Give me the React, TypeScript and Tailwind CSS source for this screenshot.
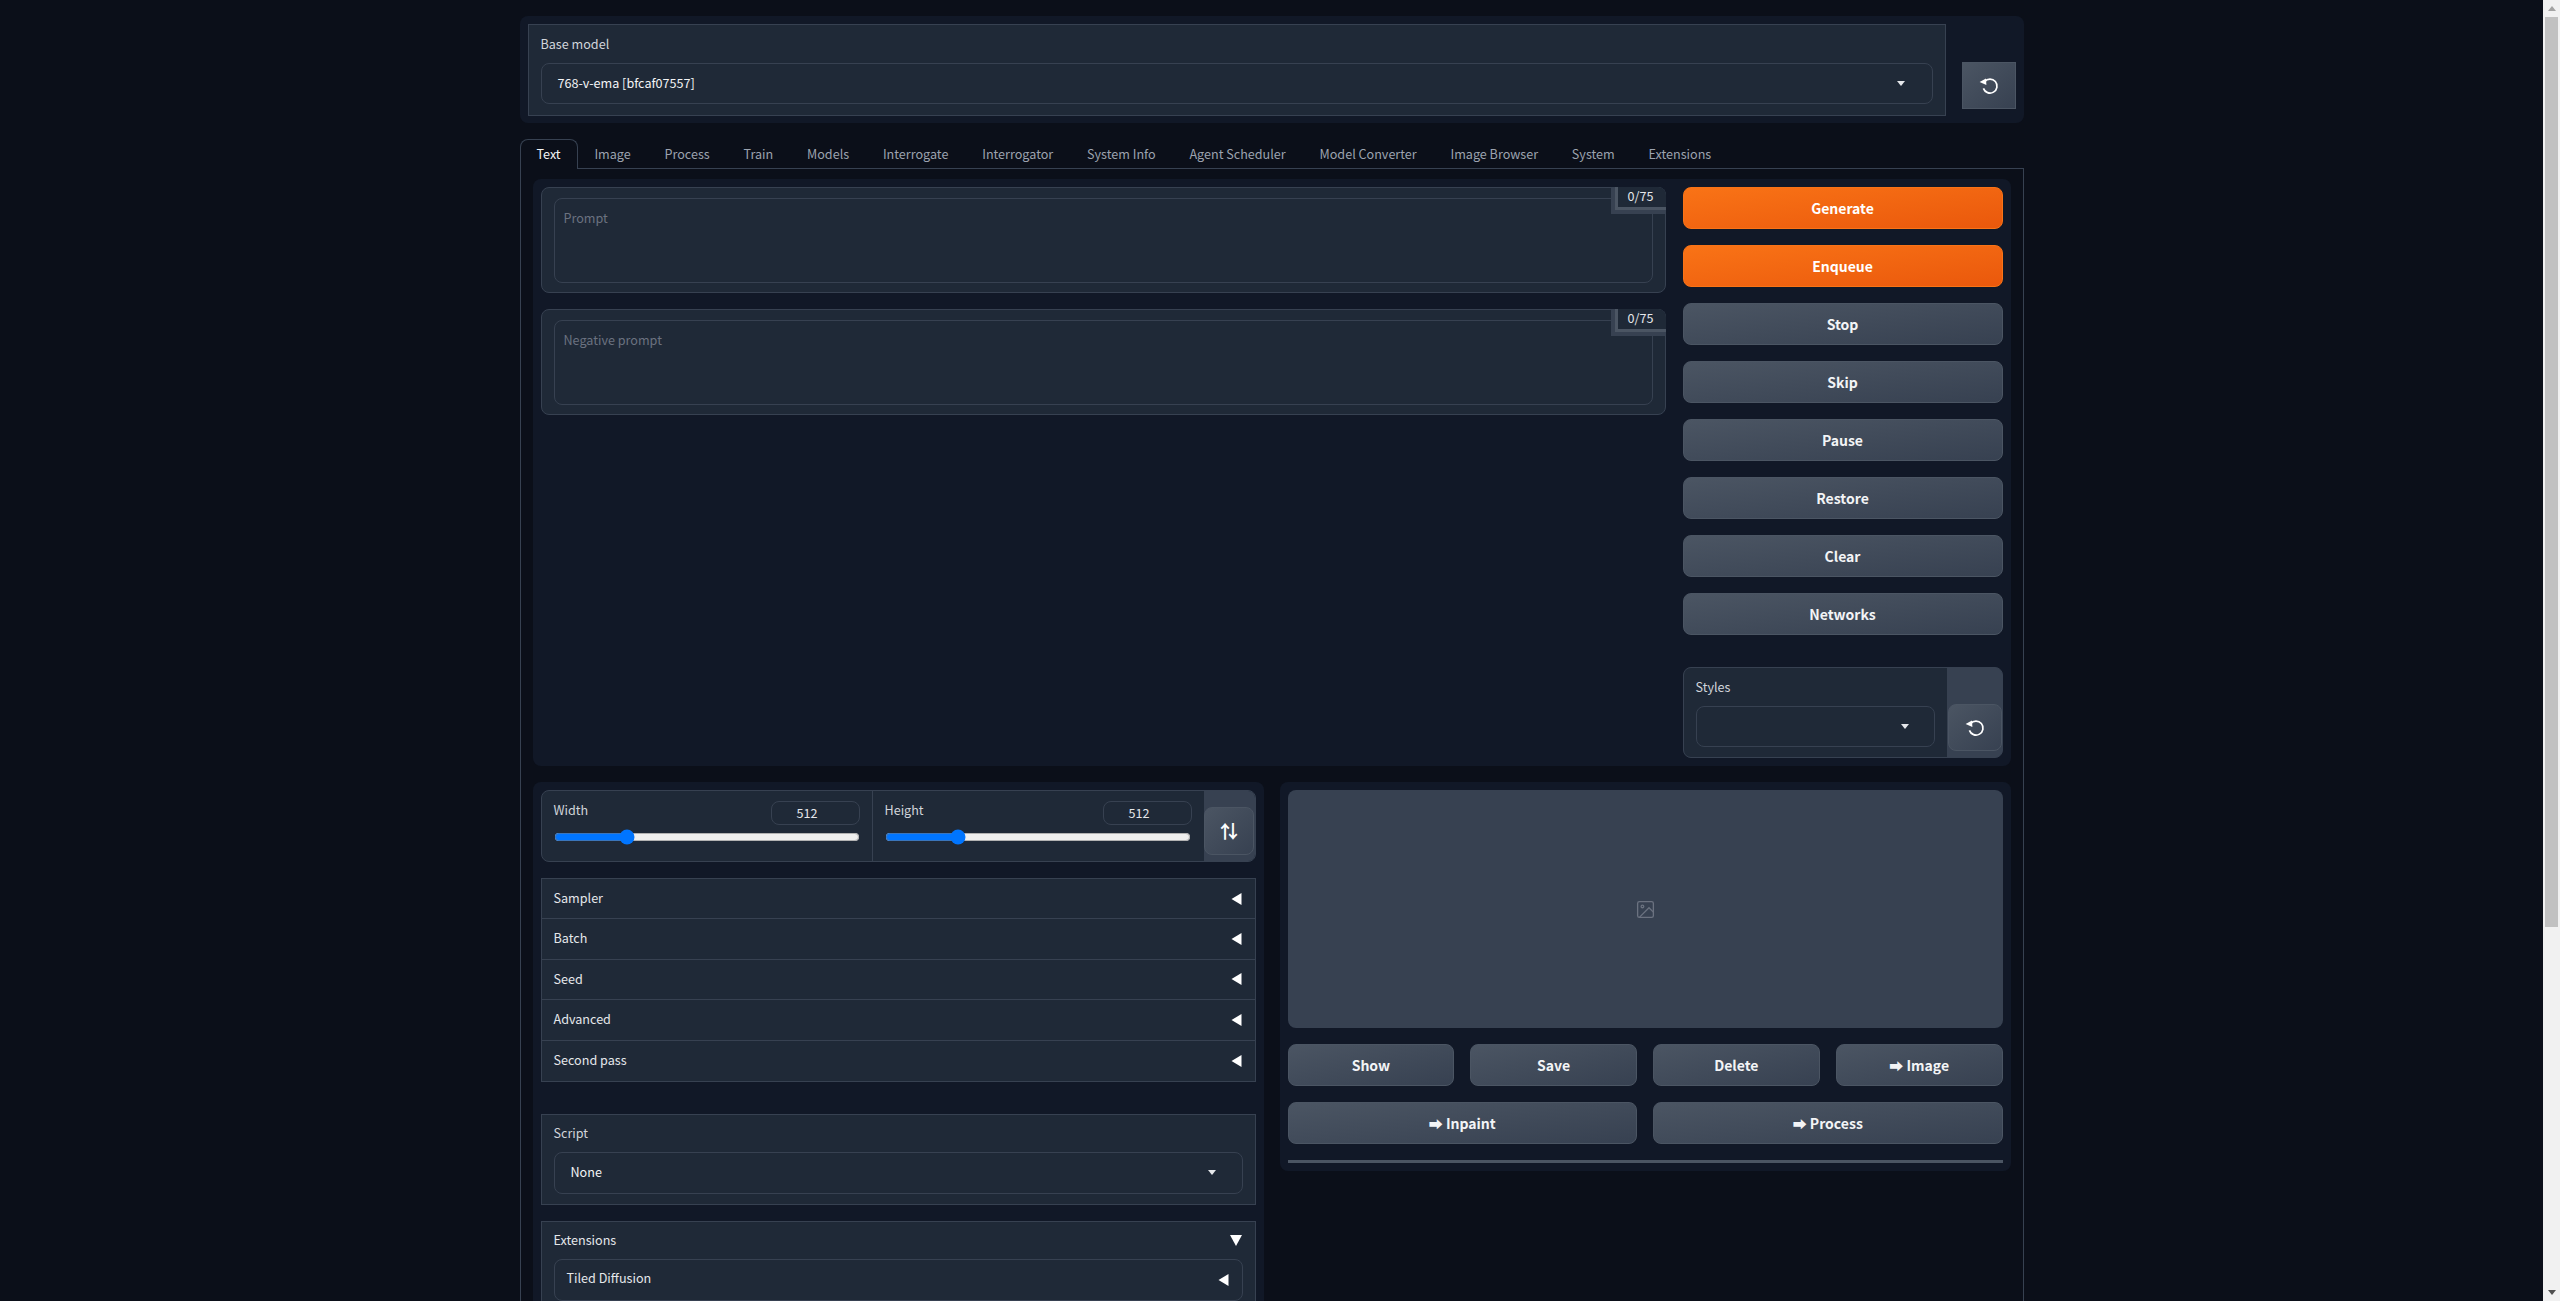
import React from "react";

const grayBtn = "bg-linear-to-br from-[#4b5563] to-[#374151] border border-[#4b5563] text-[#f3f4f6] font-bold text-[14px]";

function Caret() {
  return (
    <svg width="8" height="5" viewBox="0 0 8 5" className="shrink-0">
      <polygon points="0,0 8,0 4,5" fill="#e5e7eb" />
    </svg>
  );
}

function LeftTri() {
  return (
    <svg width="11" height="12" viewBox="0 0 11 12" className="shrink-0">
      <polygon points="0.5,6 10.5,0 10.5,12" fill="#ffffff" />
    </svg>
  );
}

function DownTri() {
  return (
    <svg width="12" height="11" viewBox="0 0 12 11" className="shrink-0">
      <polygon points="0,0 12,0 6,11" fill="#ffffff" />
    </svg>
  );
}

function Refresh() {
  return (
    <svg width="20" height="18" viewBox="0 0 20 18" fill="none" className="shrink-0">
      <path d="M5.6 4.6 A7 7 0 1 1 4.4 11.4" stroke="#ffffff" strokeWidth="1.7" />
      <polygon points="0.6,5 7,1.4 7.4,8" fill="#ffffff" />
    </svg>
  );
}

function Dropdown({ value, w, caretR = "pr-[27px]", h = "h-[41px]", textCls = "" }: { value?: string; w: string; caretR?: string; h?: string; textCls?: string }) {
  return (
    <div className={`flex items-center justify-between rounded-lg border border-[#374151] bg-[#1f2937] pl-4 text-[12.6px] text-[#f3f4f6] ${w} ${h} ${caretR}`}>
      <span className={textCls}>{value}</span>
      <Caret />
    </div>
  );
}

function PromptBox({ placeholder }: { placeholder: string }) {
  return (
    <div className="relative h-[106px] rounded-lg border border-[#374151] bg-[#1f2937] px-3 pt-[10px]">
      <div className="h-[85px] rounded-lg border border-[#374151] bg-[#1f2937] px-[9px] pt-[9px] text-[12.6px] leading-5 text-[#6b7280]">{placeholder}</div>
      <div className="absolute -right-px -top-px flex h-[27px] w-[55px] justify-end rounded-tr-lg bg-[#374151]">
        <div className="flex h-[23px] w-[51px] items-center justify-center rounded-tr-lg border-b-[3px] border-l-[3px] border-[#4b5563] bg-[#1f2937] pb-px pr-[2px] text-[12.6px] text-[#e5e7eb]">0/75</div>
      </div>
    </div>
  );
}

function Size({ label, border }: { label: string; border?: boolean }) {
  return (
    <div className={`flex h-full w-[331px] flex-col px-3 pt-[10px] ${border ? "border-r border-[#374151]" : ""}`}>
      <div className="flex h-[25px] items-start justify-between">
        <span className="text-[12.6px] leading-[18px] text-[#d1d5db]">{label}</span>
        <div className="flex h-[24px] w-[89px] items-center rounded-lg border border-[#374151] pl-[25px] text-[12.6px] text-[#e5e7eb]">512</div>
      </div>
      <input type="range" min={64} max={2048} step={8} defaultValue={512} className="mt-[3px] h-4 w-[306px]" />
    </div>
  );
}

function Row({ label, last }: { label: string; last?: boolean }) {
  return (
    <div className={`flex h-[40.4px] items-center justify-between pl-3 pr-[13px] text-[12.6px] text-[#e5e7eb] ${last ? "" : "border-b border-[#374151]"}`}>
      <span className="-mt-px">{label}</span>
      <LeftTri />
    </div>
  );
}

const tabs = ["Image", "Process", "Train", "Models", "Interrogate", "Interrogator", "System Info", "Agent Scheduler", "Model Converter", "Image Browser", "System", "Extensions"];
const actions = ["Stop", "Skip", "Pause", "Restore", "Clear", "Networks"];

export default function App() {
  return (
    <div className="flex h-[1301px] overflow-hidden bg-[#0b0f19] font-['Noto_Sans_CJK_SC',sans-serif]">
      <main className="h-full min-w-0 flex-1 overflow-hidden">
        <div className="mx-auto w-[1504px] pt-4">
          {/* Checkpoint bar */}
          <div className="flex h-[107px] items-start rounded-lg bg-[#111827] pl-2 pt-2">
            <div className="h-[92px] w-[1418px] border border-[#374151] bg-[#1f2937] px-3 pt-[9px]">
              <div className="mb-[9px] h-[20px] text-[12.6px] leading-5 text-[#d1d5db]">Base model</div>
              <Dropdown value="768-v-ema [bfcaf07557]" w="w-[1392px]" caretR="pr-[27px]" />
            </div>
            <button className="ml-4 mt-[38px] flex h-[47px] w-[54px] items-center justify-center border border-[#4b5563] bg-linear-to-br from-[#4b5563] to-[#374151]">
              <Refresh />
            </button>
          </div>

          {/* Tabs */}
          <div className="mt-4 flex h-[30px] items-start border-b border-[#374151] text-[12.6px]">
            <div className="-mb-px flex h-[30px] w-[58px] items-center justify-center rounded-t-lg border border-b-0 border-[#374151] bg-[#0b0f19] text-[#f3f4f6]">Text</div>
            {tabs.map((t) => (
              <div key={t} className="flex h-[29px] items-center px-[16.9px] pt-px text-[#9ca3af]">{t}</div>
            ))}
          </div>

          {/* Tab body */}
          <div className="h-[1200px] border-x border-[#374151] px-3 pt-[10px]">
            <div className="flex h-[587px] gap-[17px] rounded-lg bg-[#111827] p-2">
              <div className="flex w-[1125px] flex-col gap-4">
                <PromptBox placeholder="Prompt" />
                <PromptBox placeholder="Negative prompt" />
              </div>
              <div className="flex w-[320px] flex-col">
                <button className="h-[42px] rounded-lg border border-[#f97316] bg-linear-to-br from-[#f97316] to-[#ea580c] text-[14px] font-bold text-white">Generate</button>
                <button className="mt-4 h-[42px] rounded-lg border border-[#f97316] bg-linear-to-br from-[#f97316] to-[#ea580c] text-[14px] font-bold text-white">Enqueue</button>
                {actions.map((a) => (
                  <button key={a} className={`mt-4 h-[42px] rounded-lg ${grayBtn}`}>{a}</button>
                ))}
                <div className="mt-8 flex h-[91px] overflow-hidden rounded-lg border border-[#374151] bg-[#374151]">
                  <div className="h-full w-[263px] bg-[#1f2937] px-3 pt-[9px]">
                    <div className="mb-[9px] h-[20px] text-[12.6px] leading-5 text-[#d1d5db]">Styles</div>
                    <Dropdown w="w-[239px]" caretR="pr-[25px]" />
                  </div>
                  <div className="flex flex-1 items-end pb-[6px] pl-px">
                    <button className="flex h-[47px] w-[54px] items-center justify-center rounded-lg border border-[#4b5563] bg-linear-to-br from-[#4b5563] to-[#374151]">
                      <Refresh />
                    </button>
                  </div>
                </div>
              </div>
            </div>

            <div className="mt-4 flex items-start gap-4">
              {/* Left column */}
              <div className="h-[1000px] w-[731px] rounded-lg bg-[#111827] p-2">
                <div className="flex h-[72px] overflow-hidden rounded-lg border border-[#374151] bg-[#1f2937]">
                  <Size label="Width" border />
                  <Size label="Height" />
                  <div className="flex flex-1 items-center justify-end bg-[#374151] pr-px pt-[10px]">
                    <button className="flex h-[48px] w-[50px] items-center justify-center rounded-lg border border-[#4b5563] bg-linear-to-br from-[#4b5563] to-[#374151] pb-[3px] pl-px text-lg font-bold text-white">⇅</button>
                  </div>
                </div>

                <div className="mt-4 border border-[#374151] bg-[#1f2937]">
                  <Row label="Sampler" />
                  <Row label="Batch" />
                  <Row label="Seed" />
                  <Row label="Advanced" />
                  <Row label="Second pass" last />
                </div>

                <div className="mt-8 h-[91px] border border-[#374151] bg-[#1f2937] px-3 pt-2">
                  <div className="mb-[9px] h-[20px] text-[12.6px] leading-5 text-[#d1d5db]">Script</div>
                  <Dropdown value="None" w="w-[689px]" caretR="pr-[26px]" h="h-[42px]" textCls="-mt-[2px]" />
                </div>

                <div className="mt-4 border border-[#374151] bg-[#1f2937] px-3 pb-3">
                  <div className="flex h-[37px] items-center justify-between pr-px text-[12.6px] text-[#e5e7eb]">
                    <span>Extensions</span>
                    <DownTri />
                  </div>
                  <div className="flex h-[42px] items-center justify-between rounded-lg border border-[#374151] pl-3 pr-[13px] text-[12.6px] text-[#e5e7eb]">
                    <span className="-mt-[3px]">Tiled Diffusion</span>
                    <LeftTri />
                  </div>
                </div>
              </div>

              {/* Right column */}
              <div className="w-[731px] rounded-lg bg-[#111827] p-2">
                <div className="flex h-[238px] items-center justify-center rounded-lg bg-[#374151]">
                  <svg width="21" height="21" viewBox="0 0 24 24" fill="none" stroke="#6b7280" strokeWidth="1.5">
                    <rect x="3" y="3" width="18" height="18" rx="2" />
                    <circle cx="8.5" cy="8.5" r="1.5" />
                    <polyline points="21 15 16 10 5 21" />
                  </svg>
                </div>
                <div className="mt-4 grid grid-cols-4 gap-4">
                  {["Show", "Save", "Delete", "➡ Image"].map((b) => (
                    <button key={b} className={`h-[42px] rounded-lg ${grayBtn}`}>{b}</button>
                  ))}
                </div>
                <div className="mt-4 grid grid-cols-2 gap-4">
                  {["➡ Inpaint", "➡ Process"].map((b) => (
                    <button key={b} className={`h-[42px] rounded-lg ${grayBtn}`}>{b}</button>
                  ))}
                </div>
                <div className="mt-4 h-[3px] bg-[#4b5563]" />
              </div>
            </div>
          </div>
        </div>
      </main>

      {/* Window scrollbar */}
      <div className="flex h-full w-[17px] shrink-0 flex-col items-center bg-[#f1f1f1]">
        <svg width="8" height="5" viewBox="0 0 8 5" className="mt-[6px] shrink-0">
          <polygon points="4,0 8,5 0,5" fill="#a3a3a3" />
        </svg>
        <div className="mt-[6px] h-[910px] w-[13px] bg-[#c1c1c1]" />
        <div className="flex-1" />
        <svg width="8" height="5" viewBox="0 0 8 5" className="mb-[6px] shrink-0">
          <polygon points="0,0 8,0 4,5" fill="#505050" />
        </svg>
      </div>
    </div>
  );
}
